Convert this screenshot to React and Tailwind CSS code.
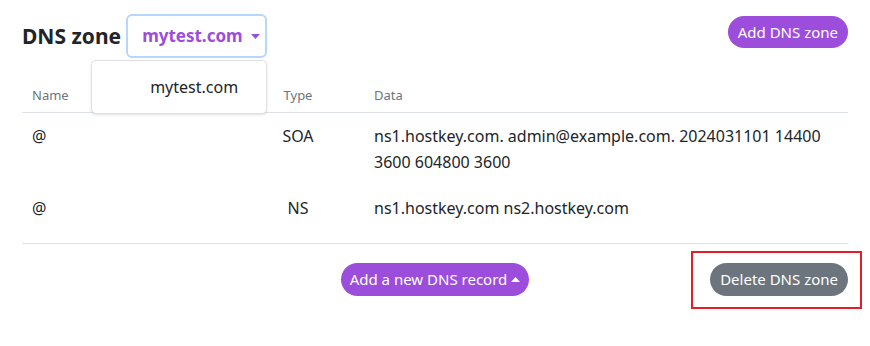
import React from "react";

function Caret({ up = false, className = "" }) {
  return (
    <svg width="9" height="5" viewBox="0 0 9 5" className={className}>
      {up ? <path d="M0 5 L4.5 0 L9 5 Z" fill="currentColor" /> : <path d="M0 0 L4.5 5 L9 0 Z" fill="currentColor" />}
    </svg>
  );
}

export default function App() {
  const font = { fontFamily: '"Noto Sans", "Open Sans", sans-serif' };
  return (
    <div className="w-[870px] h-[346px] bg-white text-[#212529] px-[22px] pt-[14px]" style={font}>
      {/* header */}
      <div className="flex items-start justify-between h-[44px]">
        <div className="flex items-center h-[44px]">
          <h1 className="text-[21px] font-bold text-[#212529] mr-[5px] leading-none">DNS zone</h1>
          <div className="relative">
            <div className="h-[44px] w-[141px] border-2 border-[#b7d6fb] rounded-[6px] flex items-center pl-[14px] gap-[8px] text-[#9c4ddc] font-bold text-[17px]">
              <span>mytest.com</span>
              <Caret className="text-[#9c4ddc]" />
            </div>
            <div className="absolute left-[-35px] top-[46px] w-[176px] h-[54px] bg-white border border-[#dee2e6] rounded-[5px] shadow-sm flex items-center pl-[58px] text-[16px] text-[#212529] z-10">
              mytest.com
            </div>
          </div>
        </div>
        <button className="mt-[2px] h-[32px] px-[10px] rounded-full bg-[#9c4ddc] text-white text-[15px] leading-none">
          Add DNS zone
        </button>
      </div>

      {/* table */}
      <div className="border-b border-[#dee2e6] pb-[12px]">
        <div className="grid grid-cols-[210px_132px_1fr] h-[55px] items-end pb-[7px] border-b border-[#dee2e6] text-[13px] text-[#6c757d]">
          <div className="pl-[10px]">Name</div>
          <div className="text-center">Type</div>
          <div className="pl-[10px]">Data</div>
        </div>
        <div className="grid grid-cols-[210px_132px_1fr] py-[10px] text-[16px] leading-[26px]">
          <div className="pl-[10px]">@</div>
          <div className="text-center">SOA</div>
          <div className="pl-[10px] pr-[10px]">ns1.hostkey.com. admin@example.com. 2024031101 14400 3600 604800 3600</div>
        </div>
        <div className="grid grid-cols-[210px_132px_1fr] py-[10px] text-[16px] leading-[26px]">
          <div className="pl-[10px]">@</div>
          <div className="text-center">NS</div>
          <div className="pl-[10px]">ns1.hostkey.com ns2.hostkey.com</div>
        </div>
      </div>

      {/* buttons */}
      <div className="grid grid-cols-[1fr_auto_1fr] items-center mt-[19px]">
        <div />
        <button className="h-[33px] px-[9px] rounded-full bg-[#9c4ddc] text-white text-[15px] flex items-center gap-[4px]">
          Add a new DNS record
          <Caret up className="text-white" />
        </button>
        <div className="flex justify-end">
          <div className="relative">
            <button className="h-[33px] px-[10px] rounded-full bg-[#6c757d] text-white text-[15px]">Delete DNS zone</button>
            <div className="absolute left-[-19px] right-[-14px] top-[-12px] bottom-[-13px] border-2 border-[#e31e26] pointer-events-none" />
          </div>
        </div>
      </div>
    </div>
  );
}
